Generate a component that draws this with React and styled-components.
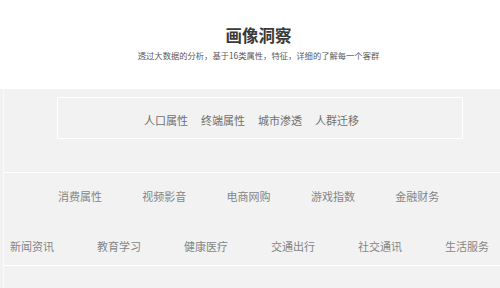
import React from "react";
import styled, { createGlobalStyle } from "styled-components";

const Global = createGlobalStyle`
  html, body { margin: 0; padding: 0; background: #fff; }
  body { font-family: "Noto Sans CJK SC", "Noto Sans", sans-serif; width: 500px; height: 288px; overflow: hidden; }
`;

const Header = styled.header`
  height: 89px;
  box-sizing: border-box;
  padding-top: 24px;
  display: flex;
  flex-direction: column;
  align-items: center;
  padding-left: 17px;
`;

const Title = styled.h1`
  margin: 0;
  font-size: 16.5px;
  line-height: 22px;
  font-weight: 700;
  color: #3a3a3a;
  letter-spacing: 0;
`;

const Subtitle = styled.p`
  margin: 3px 0 0;
  font-size: 8.3px;
  line-height: 12px;
  color: #5a5a5a;
`;

const GrayArea = styled.div`
  background: #f2f2f2;
  padding-left: 3px;
  height: 199px;
`;

const Inner = styled.div`
  border-left: 1px solid #fafafa;
  height: 100%;
`;

const TopPanel = styled.section`
  height: 84px;
  box-sizing: border-box;
  padding: 8px 0 0 53px;
  border-bottom: 1px solid #fff;
`;

const TabBox = styled.div`
  width: 406px;
  height: 42px;
  box-sizing: border-box;
  border: 1px solid #fff;
  display: flex;
  align-items: center;
  padding: 3px 0 0 86px;
  gap: 13px;
`;

const Tab = styled.span`
  font-size: 11px;
  line-height: 16px;
  color: #707070;
`;

const CatPanel = styled.section`
  height: 93px;
  box-sizing: border-box;
  padding-top: 13px;
  border-bottom: 1px solid #fff;
  display: flex;
  flex-direction: column;
  gap: 30px;
`;

const Row = styled.div`
  display: flex;
  align-items: center;
  height: 20px;
  padding-left: ${(p) => p.$left}px;
  gap: ${(p) => p.$gap}px;
`;

const Cat = styled.span`
  font-size: 11px;
  line-height: 20px;
  color: #858585;
  white-space: nowrap;
`;

const row1 = ["消费属性", "视频影音", "电商网购", "游戏指数", "金融财务"];
const row2 = ["新闻资讯", "教育学习", "健康医疗", "交通出行", "社交通讯", "生活服务"];

export default function App() {
  return (
    <>
      <Global />
      <Header>
        <Title>画像洞察</Title>
        <Subtitle>透过大数据的分析，基于16类属性，特征，详细的了解每一个客群</Subtitle>
      </Header>
      <GrayArea>
        <Inner>
          <TopPanel>
            <TabBox>
              {["人口属性", "终端属性", "城市渗透", "人群迁移"].map((t) => (
                <Tab key={t}>{t}</Tab>
              ))}
            </TabBox>
          </TopPanel>
          <CatPanel>
            <Row $left={54} $gap={40.3}>
              {row1.map((t) => (
                <Cat key={t}>{t}</Cat>
              ))}
            </Row>
            <Row $left={6} $gap={43}>
              {row2.map((t) => (
                <Cat key={t}>{t}</Cat>
              ))}
            </Row>
          </CatPanel>
        </Inner>
      </GrayArea>
    </>
  );
}
